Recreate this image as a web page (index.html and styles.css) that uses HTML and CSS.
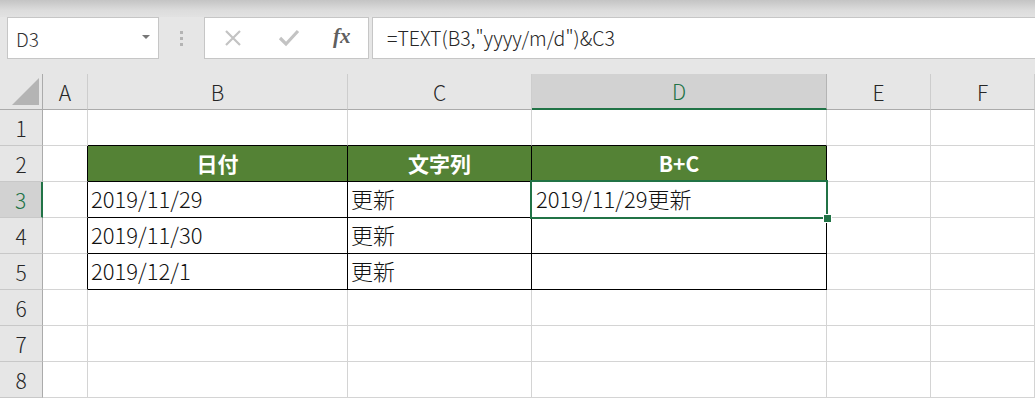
FILE: index.html
```html
<!DOCTYPE html>
<html lang="ja">
<head>
    <meta charset="UTF-8">
    <meta name="viewport" content="width=device-width, initial-scale=1.0">
    <title>TEXT関数</title>
    <link rel="stylesheet" href="styles.css">
</head>
<body>
    <div class="app">
        <div class="ribbon-edge"></div>

        <!-- 名前ボックスと数式バー -->
        <div class="formula-bar">
            <div class="name-box">
                <span class="name-text">D3</span>
                <span class="name-arrow"></span>
            </div>
            <div class="grip">
                <span></span><span></span><span></span>
            </div>
            <div class="fx-buttons">
                <svg class="ico" width="20" height="20" viewBox="0 0 20 20">
                    <path d="M3 3 L17 17 M17 3 L3 17" stroke="#c3c3c3" stroke-width="2.2" fill="none"/>
                </svg>
                <svg class="ico" width="22" height="20" viewBox="0 0 22 20">
                    <path d="M2 10 L8 16 L20 3" stroke="#c3c3c3" stroke-width="3.2" fill="none"/>
                </svg>
                <span class="fx">fx</span>
            </div>
            <div class="formula-input">=TEXT(B3,"yyyy/m/d")&amp;C3</div>
        </div>

        <div class="gap"></div>

        <!-- シート -->
        <div class="sheet">
            <div class="corner"><span class="tri"></span></div>
            <div class="ch">A</div>
            <div class="ch">B</div>
            <div class="ch">C</div>
            <div class="ch ch-sel">D</div>
            <div class="ch">E</div>
            <div class="ch">F</div>

            <div class="rh">1</div>
            <div class="c"></div>
            <div class="c tt"></div>
            <div class="c tt"></div>
            <div class="c tt"></div>
            <div class="c"></div>
            <div class="c"></div>

            <div class="rh">2</div>
            <div class="c tl"></div>
            <div class="c t th">日付</div>
            <div class="c t th">文字列</div>
            <div class="c t th">B+C</div>
            <div class="c"></div>
            <div class="c"></div>

            <div class="rh rh-sel">3</div>
            <div class="c tl"></div>
            <div class="c t">2019/11/29</div>
            <div class="c t">更新</div>
            <div class="c t active">2019/11/29更新<span class="sel"><span class="handle"></span></span></div>
            <div class="c"></div>
            <div class="c"></div>

            <div class="rh">4</div>
            <div class="c tl"></div>
            <div class="c t">2019/11/30</div>
            <div class="c t">更新</div>
            <div class="c t"></div>
            <div class="c"></div>
            <div class="c"></div>

            <div class="rh">5</div>
            <div class="c tl"></div>
            <div class="c t">2019/12/1</div>
            <div class="c t">更新</div>
            <div class="c t"></div>
            <div class="c"></div>
            <div class="c"></div>

            <div class="rh">6</div>
            <div class="c"></div>
            <div class="c"></div>
            <div class="c"></div>
            <div class="c"></div>
            <div class="c"></div>
            <div class="c"></div>

            <div class="rh">7</div>
            <div class="c"></div>
            <div class="c"></div>
            <div class="c"></div>
            <div class="c"></div>
            <div class="c"></div>
            <div class="c"></div>

            <div class="rh">8</div>
            <div class="c"></div>
            <div class="c"></div>
            <div class="c"></div>
            <div class="c"></div>
            <div class="c"></div>
            <div class="c"></div>
        </div>
    </div>
</body>
</html>
```

FILE: styles.css
```css
*{box-sizing: border-box;}
body{margin: 0; background: #fff; font-family: "Noto Sans CJK JP", "Noto Sans", sans-serif; overflow: hidden;}

.app{width: 1035px; height: 398px; background: #e6e6e6; overflow: hidden;}

/* 上のグラデーション */
.ribbon-edge{height: 17px; background: linear-gradient(#c4c4c4, #dcdcdc 60%, #e2e2e2);}

/* 数式バー */
.formula-bar{display: flex; height: 42px; padding-left: 7px;}
.name-box{width: 152px; background: #fff; border: 1px solid #c6c6c6; display: flex; align-items: center; justify-content: space-between; padding: 0 8px 0 8px;}
.name-text{font-size: 19px; font-weight: 300; color: #333;}
.name-arrow{width: 0; height: 0; border-left: 4px solid transparent; border-right: 4px solid transparent; border-top: 4px solid #777; margin-bottom: 3px;}
.grip{width: 45px; display: flex; flex-direction: column; align-items: center; justify-content: center; gap: 3px;}
.grip span{width: 3px; height: 3px; background: #b4b4b4;}
.fx-buttons{width: 165px; background: #fff; border: 1px solid #c6c6c6; display: flex; align-items: center; padding-left: 18px;}
.fx-buttons .ico{margin-right: 35px;}
.fx-buttons .ico + .ico{margin-right: 33px;}
.fx{font-family: "Liberation Serif", serif; font-style: italic; font-weight: bold; font-size: 21px; color: #5f5f5f; margin-top: -3px;}
.formula-input{flex: 1; margin-left: 3px; margin-right: -2px; background: #fff; border: 1px solid #c6c6c6; font-size: 19.5px; font-weight: 300; color: #262626; display: flex; align-items: center; padding-left: 14px; padding-bottom: 2px;}

.gap{height: 15px;}

/* シート */
.sheet{display: grid; grid-template-columns: 43px 45px 260px 184px 295px 104px 1fr; grid-auto-rows: 36px; background: #fff;}

.corner{background: #e6e6e6; border-right: 1px solid #ababab; border-bottom: 1px solid #ababab; position: relative;}
.tri{position: absolute; left: 12px; top: 4px; width: 0; height: 0; border-left: 27px solid transparent; border-bottom: 27px solid #b4b4b4;}

.ch{background: #e6e6e6; border-right: 1px solid #cdcdcd; border-bottom: 1px solid #ababab; display: flex; align-items: center; justify-content: center; font-size: 21px; font-weight: 300; color: #262626;}
.ch-sel{background: #d2d2d2; color: #217346; border-bottom: 2px solid #217346; border-right-color: #b4b4b4;}

.rh{background: #e6e6e6; border-right: 1px solid #ababab; border-bottom: 1px solid #c8c8c8; display: flex; align-items: center; justify-content: center; font-size: 21px; font-weight: 300; color: #262626;}
.rh-sel{background: #d2d2d2; color: #217346; border-right: 2px solid #217346;}

.c{border-right: 1px solid #d4d4d4; border-bottom: 1px solid #d4d4d4; display: flex; align-items: center; padding-left: 3px; padding-bottom: 3px; font-size: 22px; font-weight: 300; color: #111; white-space: nowrap; position: relative;}
.t{border-right-color: #000; border-bottom-color: #000;}
.tl{border-right-color: #000;}
.tt{border-bottom-color: #000;}
.th{background: #548235; color: #fff; font-weight: bold; font-size: 21px; justify-content: center; padding-left: 0; padding-bottom: 1px;}

/* 選択セル */
.active{padding-left: 4px; z-index: 2;}
.sel{position: absolute; left: -2px; top: -2px; right: -2px; bottom: -2px; border: 2px solid #217346;}
.handle{position: absolute; right: -6px; bottom: -6px; width: 9px; height: 9px; background: #217346; border: 1px solid #fff;}
```
